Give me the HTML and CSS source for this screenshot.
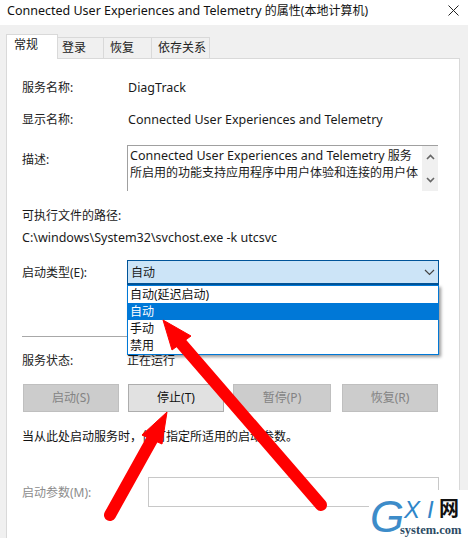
FILE: index.html
```html
<!DOCTYPE html>
<html lang="zh-CN">
<head>
<meta charset="utf-8">
<title>属性</title>
<link rel="stylesheet" href="styles.css">
</head>
<body>
<div class="dialog">
  <header class="titlebar">
    <span class="title"><span class="latin">Connected User Experiences and Telemetry</span> 的属性(本地计算机)</span>
    <svg class="close" width="11" height="11" viewBox="0 0 11 11"><path d="M.5.5l10 10M10.500.5l-10 10" stroke="#222" stroke-width="1" fill="none"/></svg>
  </header>
  <div class="body">
    <nav class="tabs">
      <div class="tab active">常规</div>
      <div class="tab t2">登录</div>
      <div class="tab t3">恢复</div>
      <div class="tab t4">依存关系</div>
    </nav>
    <main class="panel">
      <div class="row r-name"><span class="label">服务名称:</span><span class="val latin">DiagTrack</span></div>
      <div class="row r-display"><span class="label">显示名称:</span><span class="val latin">Connected User Experiences and Telemetry</span></div>
      <div class="row r-desc">
        <span class="label desc-label">描述:</span>
        <div class="descbox">
          <div class="desctext"><span class="latin">Connected User Experiences and Telemetry</span> 服务<br>所启用的功能支持应用程序中用户体验和连接的用户体</div>
          <div class="scroll">
            <svg width="9" height="6" viewBox="0 0 9 6"><path d="M1 5l3.500-3.500L8 5" stroke="#666" stroke-width="1.600" fill="none"/></svg>
            <svg width="9" height="6" viewBox="0 0 9 6"><path d="M1 1l3.500 3.500L8 1" stroke="#666" stroke-width="1.600" fill="none"/></svg>
          </div>
        </div>
      </div>
      <div class="pathlabel">可执行文件的路径:</div>
      <div class="pathvalue latin">C:\windows\System32\svchost.exe -k utcsvc</div>
      <div class="row r-type">
        <span class="label">启动类型(E):</span>
        <div class="selectwrap">
          <div class="select"><span>自动</span>
            <svg width="11" height="7" viewBox="0 0 11 7"><path d="M1 1l4.500 4.500L10 1" stroke="#444" stroke-width="1.200" fill="none"/></svg>
          </div>
          <ul class="dropdown">
            <li>自动(延迟启动)</li>
            <li class="selected">自动</li>
            <li>手动</li>
            <li>禁用</li>
          </ul>
        </div>
      </div>
      <hr class="sep">
      <div class="row r-status"><span class="label">服务状态:</span><span>正在运行</span></div>
      <div class="buttons">
        <div class="btn off">启动(S)</div>
        <div class="btn on">停止(T)</div>
        <div class="btn off wide">暂停(P)</div>
        <div class="btn off">恢复(R)</div>
      </div>
      <p class="note">当从此处启动服务时，你可指定所适用的启动参数。</p>
      <div class="row r-param"><span class="paramlabel">启动参数(M):</span><div class="paraminput"></div></div>
    </main>
  </div>
  <svg class="arrows" width="468" height="538" viewBox="0 0 468 538">
    <g fill="#f00" stroke="#f00" stroke-linejoin="round">
      <path d="M321 505L180 342" stroke-width="12" stroke-linecap="round" fill="none"/>
      <path d="M163 320L191 336L172 350Z" stroke-width="1"/>
      <path d="M110 515L154 436" stroke-width="12" stroke-linecap="round" fill="none"/>
      <path d="M167 412L142 435L162 444Z" stroke-width="1"/>
    </g>
  </svg>
  <div class="watermark">
    <span class="wm-g">G</span><span class="wm-x">X</span><span class="wm-i">I</span><span class="wm-net">网</span>
    <span class="wm-site">system.com</span>
  </div>
</div>
</body>
</html>
```
FILE: styles.css
```css
* { box-sizing: border-box; }
html, body { margin: 0; padding: 0; }
body {
  width: 468px;
  height: 538px;
  overflow: hidden;
  background: #fff;
  color: #1a1a1a;
  font: 12px/17px "Noto Sans", "Noto Sans CJK SC", sans-serif;
}
.latin { font-size: 12.500px; }
.dialog { position: relative; width: 468px; height: 538px; display: flex; flex-direction: column; overflow: hidden; }
.titlebar { height: 25px; padding: 0 9px 5px 7px; display: flex; justify-content: space-between; align-items: center; background: #fff; color: #111; }
.title { white-space: nowrap; }
.close { flex: none; }
.body { flex: 1; background: #f0f0f0; padding: 9px 8px 0 6px; display: flex; flex-direction: column; }
.tabs { display: flex; height: 25px; align-items: flex-end; position: relative; z-index: 1; margin-bottom: -1px; }
.tab { height: 22px; border: 1px solid #d9d9d9; border-left: 0; background: #f0f0f0; line-height: 20px; color: #222; white-space: nowrap; }
.tab.active { height: 25px; width: 52px; padding-left: 7px; background: #fff; border: 1px solid #d9d9d9; border-bottom: 0; line-height: 19px; }
.t2 { width: 46px; padding-left: 4px; }
.t3 { width: 48px; padding-left: 6px; }
.t4 { width: 58px; padding-left: 6px; }
.panel { flex: 1; background: #fff; border: 1px solid #d9d9d9; border-bottom: 0; padding: 0 20px 0 15px; display: flex; flex-direction: column; }
.row { display: flex; align-items: center; white-space: nowrap; }
.label { width: 105px; flex: none; color: #222; }
.val { margin-left: 1px; }
.r-name { margin-top: 20px; height: 17px; }
.r-display { margin-top: 15px; height: 17px; }
.r-desc { margin-top: 17px; align-items: flex-start; }
.desc-label { margin-top: 6px; }
.descbox { width: 311px; height: 46px; border: 1px solid #a0a0a0; border-right: 0; border-bottom: 0; display: flex; justify-content: space-between; }
.desctext { padding: 1px 0 0 2px; white-space: nowrap; color: #1a1a1a; }
.scroll { width: 16px; height: 45px; background: #f0f0f0; display: flex; flex-direction: column; justify-content: space-between; align-items: center; padding: 8px 0; }
.scroll svg { display: block; }
.pathlabel { margin-top: 16px; }
.pathvalue { margin-top: 5px; white-space: nowrap; }
.r-type { margin-top: 14px; height: 25px; }
.selectwrap { position: relative; width: 312px; height: 25px; }
.select { height: 25px; background: #cce4f7; border: 1px solid #005499; border-bottom-width: 2px; display: flex; align-items: center; justify-content: space-between; padding: 0 3px 0 3px; }
.dropdown { position: absolute; left: 0; top: 25px; width: 312px; height: 70px; margin: 0; padding: 0; list-style: none; background: #fff; border: 1px solid #0078d7; box-shadow: 2px 2px 3px rgba(0,0,0,.4); z-index: 2; }
.dropdown li { height: 17px; padding-left: 2px; color: #111; }
.dropdown .selected { background: #0078d7; color: #fff; }
.sep { width: 416px; height: 1px; margin: 51px 0 0; border: 0; background: #a8a8a8; }
.r-status { margin-top: 15px; height: 17px; }
.buttons { margin-top: 15px; display: flex; gap: 9px; padding-left: 1px; }
.btn { width: 96px; height: 28px; border: 1px solid #adadad; text-align: center; line-height: 25px; }
.btn.wide { width: 98px; margin-right: 2px; }
.btn.off { background: #ccc; border-color: #bfbfbf; color: #838383; }
.btn.on { background: #e1e1e1; color: #111; }
.note { margin: 16px 0 0; white-space: nowrap; color: #111; }
.r-param { margin-top: 32px; }
.paramlabel { width: 126px; flex: none; color: #8c8c8c; }
.paraminput { width: 291px; height: 30px; border: 1px solid #c8c8c8; background: #fff; }
.arrows { position: absolute; left: 0; top: 0; z-index: 3; pointer-events: none; }
.watermark { position: absolute; left: 369px; top: 490px; width: 99px; height: 48px; background: #fff; z-index: 4; overflow: hidden; }
.watermark span { position: absolute; line-height: 1; white-space: nowrap; }
.wm-g { left: 1px; top: 5px; font: italic 44px/1 "Liberation Sans", sans-serif; color: #3d8cc9; }
.wm-x { left: 35px; top: 8px; font: italic 24px/1 "Liberation Sans", sans-serif; color: #2f86c9; }
.wm-i { left: 58px; top: 8px; font: italic 24px/1 "Liberation Sans", sans-serif; color: #2f86c9; }
.wm-net { left: 70px; top: 8px; font: bold 20px/1 "Noto Sans CJK SC", sans-serif; color: #111; }
.wm-site { left: 31px; top: 34px; font: bold 12.500px/1 "Liberation Serif", serif; color: #2b4a63; }
```
